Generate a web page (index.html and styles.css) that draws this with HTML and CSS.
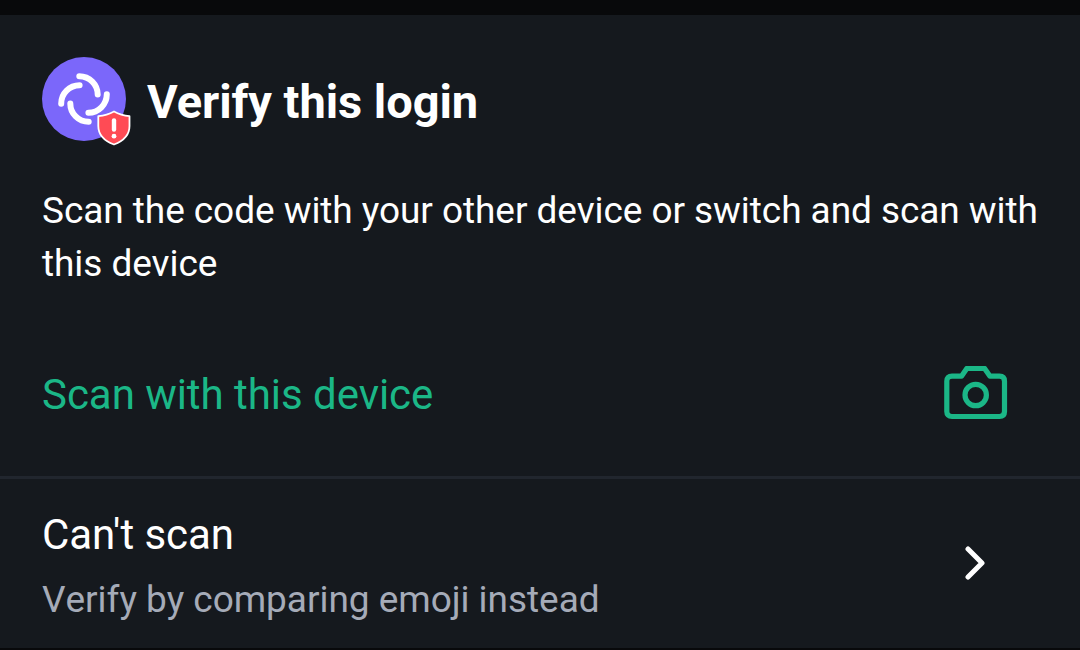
FILE: index.html
```html
<!DOCTYPE html>
<html lang="en">
<head>
<meta charset="utf-8">
<title>Verify this login</title>
<link rel="stylesheet" href="styles.css">
</head>
<body>
<main class="sheet">
  <header class="header">
    <svg class="logo" viewBox="0 0 92 92">
      <circle cx="42" cy="42" r="42" fill="#7b67fa"/>
      <g fill="none" stroke="#fff" stroke-width="6" stroke-linecap="round">
        <path d="M37.300 19.200A18.400 18.400 0 0 1 55.700 37.600"/>
        <path d="M64.800 37.300A18.400 18.400 0 0 1 46.400 55.700"/>
        <path d="M46.700 64.800A18.400 18.400 0 0 1 28.300 46.400"/>
        <path d="M19.200 46.700A18.400 18.400 0 0 1 37.600 28.300"/>
      </g>
      <path d="M72 54.500Q79 58.500 87.500 59.200V69C87.500 79 80 84.500 72 87.500C64 84.500 56.300 79 56.300 69V59.200Q65 58.500 72 54.500Z" fill="#ff4b55" stroke="#fff" stroke-width="1.800" stroke-linejoin="round"/>
      <path d="M72 63.500V72.500" stroke="#fff" stroke-width="4.400" stroke-linecap="round"/>
      <circle cx="72" cy="79.200" r="2.400" fill="#fff"/>
    </svg>
    <h1 class="title">Verify this login</h1>
  </header>
  <p class="description">Scan the code with your other device or switch and scan with this device</p>
  <a class="scan"><span>Scan with this device</span>
    <svg class="camera" viewBox="0 0 64 56"><g fill="none" stroke="#1bb787" stroke-width="5.200" stroke-linejoin="round"><path d="M8 10.200H17.500L22.800 2.500H40.600L46 10.200H55.500Q60.500 10.200 60.500 15.200V45.500Q60.500 50.500 55.500 50.500H8Q2.800 50.500 2.800 45.500V15.200Q2.800 10.200 8 10.200Z"/><circle cx="31.700" cy="29" r="10.700"/></g></svg>
  </a>
  <a class="fallback"><span class="labels"><span class="name">Can't scan</span><span class="hint">Verify by comparing emoji instead</span></span>
    <svg class="chevron" viewBox="0 0 20 34"><path d="M3 3L17 17L3 31" fill="none" stroke="#fff" stroke-width="5" stroke-linecap="round" stroke-linejoin="round"/></svg>
  </a>
</main>
</body>
</html>
```
FILE: styles.css
```css
* { box-sizing: border-box; }
body { margin: 0; background: #15191e; font-family: Roboto, sans-serif; color: #fff; }
.sheet { height: 650px; border-top: 15px solid #08090b; border-bottom: 2px solid #08090b; overflow: hidden; }
.header { display: flex; padding: 42px 42px 0; height: 142px; }
.logo { width: 92px; height: 92px; flex: none; }
.title { margin: 18px 0 0 13px; font-size: 47px; line-height: 54px; font-weight: 700; letter-spacing: -0.05px; white-space: nowrap; }
.description { margin: 27px 30px 0 42px; font-size: 37px; line-height: 53px; height: 106px; letter-spacing: -0.06px; }
.scan { display: flex; align-items: center; justify-content: space-between; height: 164px; margin-top: 22px; padding: 0 72px 0 42px; color: #1bb787; font-size: 42px; letter-spacing: -0.04px; }
.camera { width: 64px; height: 56px; }
.fallback { display: flex; justify-content: space-between; border-top: 3px solid #21262e; padding: 31px 95px 0 42px; height: 174px; }
.labels { display: flex; flex-direction: column; }
.name { font-size: 42px; line-height: 50px; letter-spacing: -0.05px; }
.hint { font-size: 37px; line-height: 44px; margin-top: 18px; color: #a5abb8; font-kerning: none; letter-spacing: -0.04px; }
.chevron { width: 20px; height: 34px; margin-top: 36px; }
```
